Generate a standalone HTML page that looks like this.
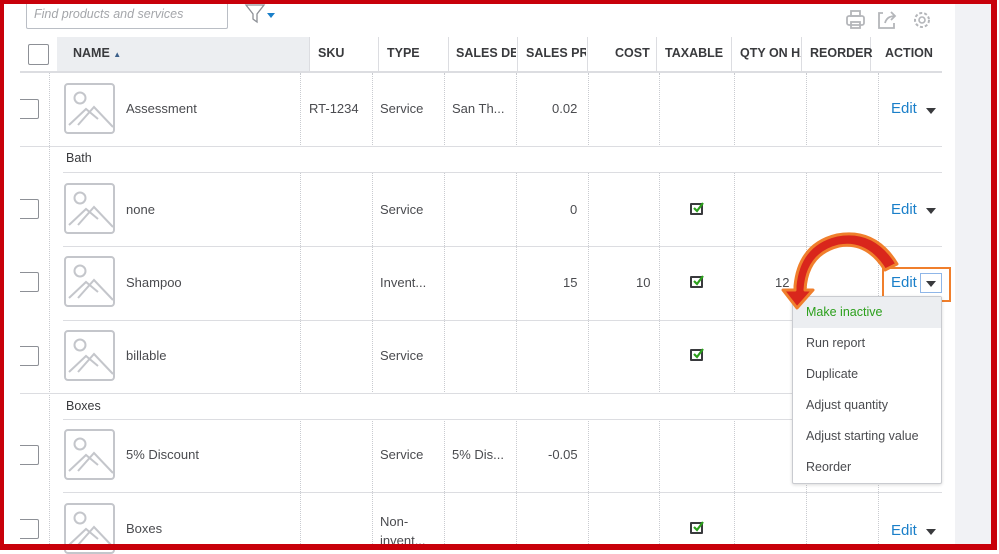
<!DOCTYPE html>
<html><head><meta charset="utf-8"><style>
*{margin:0;padding:0;box-sizing:border-box}
body{width:999px;height:550px;overflow:hidden;background:#fff;font-family:"Liberation Sans",sans-serif;position:relative;color:#393a3d}
.a{position:absolute}
.vl{position:absolute;width:0;border-left:1px dotted #c9cbd0}
.hl{position:absolute;height:1px;background:#dcdde1}
.t{position:absolute;font-size:13px;color:#4a4b4f;white-space:nowrap}
.h{position:absolute;font-size:12.5px;font-weight:bold;color:#393a3d;white-space:nowrap;top:46px}
.cb{position:absolute;left:20px;width:19px;height:20px;border:1px solid #8d9096;border-left:none;border-radius:0 2px 2px 0}
.img{position:absolute;left:64px;width:51px;height:51px;border:2px solid #c4c6cb;border-radius:4px;overflow:hidden}
.edit{position:absolute;left:891px;font-size:15px;color:#1a7fc9}
.caret{position:absolute;left:926px;width:0;height:0;border-left:5px solid transparent;border-right:5px solid transparent;border-top:6px solid #393a3d}
.chk{position:absolute;left:690px;width:13px;height:12px;border:2px solid #393a3d;border-radius:1px;overflow:visible}
.chk svg{position:absolute;left:0;top:-3px}
.mi{height:31px;line-height:31px;padding-left:13px;font-size:12.5px;color:#4a4b4f}
</style></head><body>
<div class="a" style="left:955px;top:0;width:38px;height:550px;background:#f1f2f5"></div>
<div class="a" style="left:26px;top:0;width:202px;height:29px;border:1px solid #babec5;border-top:none;border-radius:0 0 2px 2px"></div>
<div class="t" style="left:34px;top:7px;font-style:italic;color:#a4a6aa;font-size:12.5px">Find products and services</div>
<svg class="a" style="left:244px;top:2px" width="34" height="22"><path d="M2 3 L20 3 L13 12 L13 20 L9 17 L9 12 Z" fill="none" stroke="#8d9096" stroke-width="1.3"/><path d="M23 11 L31 11 L27 16 Z" fill="#1a7fc9"/></svg>
<svg class="a" style="left:845px;top:8px" width="90" height="24"><g fill="none" stroke="#b4b6ba" stroke-width="1.8"><rect x="2" y="8" width="17" height="9" rx="2"/><rect x="6" y="3" width="9" height="5"/><rect x="6" y="14" width="9" height="6"/><path d="M38 5 L34 5 L34 20 L49 20 L49 15"/><path d="M40 15 Q42 8 50 8 M46 4 L50 8 L46 12"/></g><circle cx="77" cy="12" r="7" fill="none" stroke="#b4b6ba" stroke-width="2" stroke-dasharray="3 2"/><circle cx="77" cy="12" r="3" fill="none" stroke="#b4b6ba" stroke-width="1.6"/></svg>
<div class="a" style="left:57px;top:37px;width:252px;height:34px;background:#eceef1"></div>
<div class="a" style="left:28px;top:44px;width:21px;height:21px;border:1px solid #8d9096;border-radius:2px"></div>
<div class="hl" style="left:20px;top:71px;width:922px;height:2px"></div>
<div class="a" style="left:309px;top:37px;height:34px;border-left:1px solid #dcdde1"></div>
<div class="a" style="left:378px;top:37px;height:34px;border-left:1px solid #dcdde1"></div>
<div class="a" style="left:448px;top:37px;height:34px;border-left:1px solid #dcdde1"></div>
<div class="a" style="left:517px;top:37px;height:34px;border-left:1px solid #dcdde1"></div>
<div class="a" style="left:587px;top:37px;height:34px;border-left:1px solid #dcdde1"></div>
<div class="a" style="left:656px;top:37px;height:34px;border-left:1px solid #dcdde1"></div>
<div class="a" style="left:731px;top:37px;height:34px;border-left:1px solid #dcdde1"></div>
<div class="a" style="left:801px;top:37px;height:34px;border-left:1px solid #dcdde1"></div>
<div class="a" style="left:870px;top:37px;height:34px;border-left:1px solid #dcdde1"></div>
<div class="h" style="left:73px">NAME <span style="font-size:8px;color:#3b5f8a">▲</span></div>
<div class="h" style="left:318px">SKU</div>
<div class="h" style="left:387px">TYPE</div>
<div class="h" style="left:456px;width:60px;overflow:hidden">SALES DESC</div>
<div class="h" style="left:526px;width:60px;overflow:hidden">SALES PRICE</div>
<div class="h" style="left:615px">COST</div>
<div class="h" style="left:665px">TAXABLE</div>
<div class="h" style="left:740px;width:61px;overflow:hidden">QTY ON HAND</div>
<div class="h" style="left:810px">REORDER</div>
<div class="h" style="left:885px">ACTION</div>
<div class="vl" style="left:49px;top:73px;height:477px"></div>
<div class="vl" style="left:300px;top:73px;height:74px"></div><div class="vl" style="left:300px;top:172px;height:222px"></div><div class="vl" style="left:300px;top:419px;height:131px"></div>
<div class="vl" style="left:372px;top:73px;height:74px"></div><div class="vl" style="left:372px;top:172px;height:222px"></div><div class="vl" style="left:372px;top:419px;height:131px"></div>
<div class="vl" style="left:444px;top:73px;height:74px"></div><div class="vl" style="left:444px;top:172px;height:222px"></div><div class="vl" style="left:444px;top:419px;height:131px"></div>
<div class="vl" style="left:516px;top:73px;height:74px"></div><div class="vl" style="left:516px;top:172px;height:222px"></div><div class="vl" style="left:516px;top:419px;height:131px"></div>
<div class="vl" style="left:588px;top:73px;height:74px"></div><div class="vl" style="left:588px;top:172px;height:222px"></div><div class="vl" style="left:588px;top:419px;height:131px"></div>
<div class="vl" style="left:659px;top:73px;height:74px"></div><div class="vl" style="left:659px;top:172px;height:222px"></div><div class="vl" style="left:659px;top:419px;height:131px"></div>
<div class="vl" style="left:734px;top:73px;height:74px"></div><div class="vl" style="left:734px;top:172px;height:222px"></div><div class="vl" style="left:734px;top:419px;height:131px"></div>
<div class="vl" style="left:806px;top:73px;height:74px"></div><div class="vl" style="left:806px;top:172px;height:222px"></div><div class="vl" style="left:806px;top:419px;height:131px"></div>
<div class="vl" style="left:878px;top:73px;height:74px"></div><div class="vl" style="left:878px;top:172px;height:222px"></div><div class="vl" style="left:878px;top:419px;height:131px"></div>
<div class="hl" style="left:20px;top:146px;width:922px"></div>
<div class="hl" style="left:63px;top:172px;width:879px"></div>
<div class="hl" style="left:63px;top:246px;width:879px"></div>
<div class="hl" style="left:63px;top:320px;width:879px"></div>
<div class="hl" style="left:20px;top:393px;width:922px"></div>
<div class="hl" style="left:63px;top:419px;width:879px"></div>
<div class="hl" style="left:63px;top:492px;width:879px"></div>
<div class="t" style="left:66px;top:151px;font-size:12.5px;color:#393a3d">Bath</div>
<div class="t" style="left:66px;top:399px;font-size:12.5px;color:#393a3d">Boxes</div>
<svg width="0" height="0" style="position:absolute"><defs><g id="ph"><circle cx="14" cy="13" r="5.5" fill="none" stroke="#c4c6cb" stroke-width="2"/><path d="M3 40 L20 24 L32 34 M12 40 L28 22 L47 42" fill="none" stroke="#c4c6cb" stroke-width="2"/></g><path id="ck" d="M2 6 L5 9 L11 1" fill="none" stroke="#2ca01c" stroke-width="2.2"/></defs></svg>
<div class="img" style="top:83px"><svg width="51" height="51"><use href="#ph"/></svg></div>
<div class="img" style="top:183px"><svg width="51" height="51"><use href="#ph"/></svg></div>
<div class="img" style="top:256px"><svg width="51" height="51"><use href="#ph"/></svg></div>
<div class="img" style="top:330px"><svg width="51" height="51"><use href="#ph"/></svg></div>
<div class="img" style="top:429px"><svg width="51" height="51"><use href="#ph"/></svg></div>
<div class="img" style="top:503px"><svg width="51" height="51"><use href="#ph"/></svg></div>
<div class="cb" style="top:99px"></div>
<div class="cb" style="top:199px"></div>
<div class="cb" style="top:272px"></div>
<div class="cb" style="top:346px"></div>
<div class="cb" style="top:445px"></div>
<div class="cb" style="top:519px"></div>
<div class="t" style="left:126px;top:101px">Assessment</div>
<div class="t" style="left:309px;top:101px">RT-1234</div>
<div class="t" style="left:380px;top:101px">Service</div>
<div class="t" style="left:452px;top:101px">San Th...</div>
<div class="t" style="left:552px;top:101px">0.02</div>
<div class="edit" style="top:100px">Edit</div><div class="caret" style="top:108px"></div>
<div class="t" style="left:126px;top:202px">none</div>
<div class="t" style="left:380px;top:202px">Service</div>
<div class="t" style="left:570px;top:202px">0</div>
<div class="chk" style="top:203px"><svg width="13" height="12"><use href="#ck"/></svg></div>
<div class="edit" style="top:201px">Edit</div><div class="caret" style="top:208px"></div>
<div class="t" style="left:126px;top:275px">Shampoo</div>
<div class="t" style="left:380px;top:275px">Invent...</div>
<div class="t" style="left:563px;top:275px">15</div>
<div class="t" style="left:636px;top:275px">10</div>
<div class="chk" style="top:276px"><svg width="13" height="12"><use href="#ck"/></svg></div>
<div class="t" style="left:775px;top:275px">12</div>
<div class="edit" style="top:274px">Edit</div>
<div class="a" style="left:920px;top:273px;width:22px;height:20px;border:1px solid #8fb6e8;background:#fff"></div><div class="caret" style="top:281px"></div>
<div class="a" style="left:882px;top:267px;width:69px;height:35px;border:2px solid #f07f2c"></div>
<div class="t" style="left:126px;top:348px">billable</div>
<div class="t" style="left:380px;top:348px">Service</div>
<div class="chk" style="top:349px"><svg width="13" height="12"><use href="#ck"/></svg></div>
<div class="t" style="left:126px;top:447px">5% Discount</div>
<div class="t" style="left:380px;top:447px">Service</div>
<div class="t" style="left:452px;top:447px">5% Dis...</div>
<div class="t" style="left:548px;top:447px">-0.05</div>
<div class="t" style="left:126px;top:521px">Boxes</div>
<div class="t" style="left:380px;top:512px;line-height:19px">Non-<br>invent...</div>
<div class="chk" style="top:522px"><svg width="13" height="12"><use href="#ck"/></svg></div>
<div class="edit" style="top:522px">Edit</div><div class="caret" style="top:529px"></div>
<div class="a" style="left:792px;top:296px;width:150px;height:188px;background:#fff;border:1px solid #c9cbd0;border-radius:2px;box-shadow:0 1px 3px rgba(0,0,0,.15)">
<div class="mi" style="background:#eceef1;color:#2ca01c">Make inactive</div>
<div class="mi">Run report</div>
<div class="mi">Duplicate</div>
<div class="mi">Adjust quantity</div>
<div class="mi">Adjust starting value</div>
<div class="mi">Reorder</div>
</div>
<svg class="a" style="left:775px;top:228px" width="130" height="90"><path d="M122 36 Q100 0 62 7 Q24 16 20 58 L20 62 L8 62 L22 80 L38 62 L30 62 Q32 26 64 18 Q92 13 110 42 Z" fill="#d9261c" stroke="#f07f2c" stroke-width="3" stroke-linejoin="round"/></svg>
<div class="a" style="left:0;top:0;width:997px;height:550px;border:4px solid #c8000a;border-bottom-width:6px;border-right-width:6px"></div>
</body></html>
